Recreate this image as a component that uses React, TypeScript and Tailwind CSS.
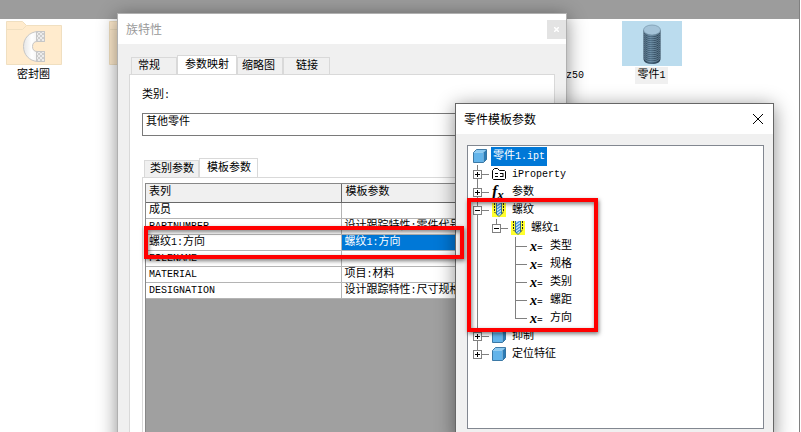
import { useState } from 'react'
import type { ReactNode } from 'react'
import clsx from 'clsx'

const FolderIcon = ({ ring = false }: { ring?: boolean }) => (
  <svg viewBox="0 0 56 44" className="h-11 w-14" shapeRendering="geometricPrecision">
    <path d="M.5 43.5V.5h16l4 4h35v39z" fill="#ffebcd" stroke="#f0dfc0" />
    <path d="M.5 8.500h16l4-4" fill="none" stroke="#f0dfc0" />
    {ring && (
      <>
        <defs>
          <pattern id="hatch" width="4" height="4" patternUnits="userSpaceOnUse">
            <path d="M0 0h4v4H0z" fill="#ececec" />
            <path d="M0 0h2v2H0zM2 2h2v2H2z" fill="#cdcdcd" />
          </pattern>
          <linearGradient id="ring" x1="0" x2="1">
            <stop offset="0" stopColor="#e6e6e6" />
            <stop offset=".4" stopColor="#fff" />
            <stop offset="1" stopColor="#e4e4e4" />
          </linearGradient>
        </defs>
        <path
          d="M38.500 10.500H32C23 11 17.500 17.500 17.500 25.500S23 40 32 40.500h6.500v-10H31c-3 0-4.500-2-4.500-5s1.500-5 4.500-5h7.500z"
          fill="url(#ring)"
          stroke="#c6c6c6"
        />
        <path d="M30.500 10.500h8v10h-8zM30.500 30.500h8v10h-8z" fill="url(#hatch)" stroke="#c6c6c6" />
      </>
    )}
  </svg>
)

const ThreadedRod = () => (
  <svg viewBox="0 0 18 40" className="h-10 w-[18px]">
    <defs>
      <linearGradient id="rod" x1="0" x2="1">
        <stop offset="0" stopColor="#24384a" />
        <stop offset=".4" stopColor="#4d6c84" />
        <stop offset="1" stopColor="#1f3344" />
      </linearGradient>
    </defs>
    <path d="M.5 6v29c0 3 3.500 5 8.500 5s8.500-2 8.500-5V6z" fill="url(#rod)" />
    {[8, 10, 12, 14, 16, 18, 20, 22, 24, 26, 28, 30, 32, 34].map((y) => (
      <path key={y} d={`M1 ${y}c1 5 15 5 16 0`} fill="none" stroke="#8fb0c6" strokeWidth=".6" />
    ))}
    <ellipse cx="9" cy="6" rx="8.500" ry="5" fill="#a4c3d8" stroke="#7796ab" strokeWidth=".7" />
  </svg>
)

const CubeIcon = () => (
  <svg viewBox="0 0 15 14" className="h-3.5 w-[15px]">
    <path d="M.5 3.500L3.500.5h10l-3 3z" fill="#8ecbf2" />
    <path d="M.5 3.500h10v10H.5z" fill="#63b4ea" />
    <path d="M10.500 3.500l3-3v10l-3 3z" fill="#2c7cb6" />
    <path d="M.5 3.500L3.500.5h10v10l-3 3H.5z" fill="none" stroke="#1d5f92" strokeWidth=".8" strokeLinejoin="round" />
  </svg>
)

const PropertyIcon = () => (
  <svg viewBox="0 0 15 14" className="h-3.5 w-[15px]" fill="none" stroke="#000">
    <path d="M.5 11.500v-8l2-2h3l2 2h5l1 1v7l-1 1h-11z" />
    <path d="M3 6.500h3M8 6.500h3M3 9.500h3M8 9.500h3M11 6v4" />
  </svg>
)

const ThreadIcon = () => (
  <svg viewBox="0 0 14 14" className="h-3.5 w-3.5">
    <path d="M0 0h14v14H0z" fill="#ffff2e" />
    <path d="M5 0h4v11l-2 2-2-2z" fill="#cfe8fb" />
    <path d="M5 3l4-3M5 6l4-3M5 9l4-3M5 12l4-3" stroke="#3f93dc" strokeWidth="1.200" />
    <path d="M4.500 0v11L7 13.500l2.500-2.500V0" fill="none" stroke="#1c5fa0" strokeWidth=".9" />
    <path d="M2.500 0v9l2 2M11.500 0v9l-2 2" fill="none" stroke="#222" strokeDasharray="2 1" />
  </svg>
)

const FxIcon = () => (
  <span className="flex font-['Liberation_Serif',serif] font-bold italic leading-none">
    <span className="text-[16px]">f</span>
    <span className="pt-1 text-[13px]">x</span>
  </span>
)

const VariableIcon = () => (
  <span className="flex items-center pt-0.5 font-['Liberation_Serif',serif] leading-none">
    <span className="text-[14px] font-bold italic">x</span>
    <span className="pt-0.5 text-[10px] font-bold">=</span>
  </span>
)

const icons: Record<string, ReactNode> = {
  cube: <CubeIcon />,
  property: <PropertyIcon />,
  fx: <FxIcon />,
  thread: <ThreadIcon />,
  variable: <VariableIcon />,
}

type Rail = 'blank' | 'pass' | 'tee' | 'end' | 'plus' | 'minus' | 'plusEnd' | 'minusEnd'

interface TreeRow {
  rails: Rail[]
  icon: string
  label: string
  latin?: string
  selected?: boolean
}

const treeRows: TreeRow[] = [
  { rails: [], icon: 'cube', label: '零件', latin: '1.ipt', selected: true },
  { rails: ['plus'], icon: 'property', label: '', latin: 'iProperty' },
  { rails: ['plus'], icon: 'fx', label: '参数' },
  { rails: ['minus'], icon: 'thread', label: '螺纹' },
  { rails: ['pass', 'minusEnd'], icon: 'thread', label: '螺纹', latin: '1' },
  { rails: ['pass', 'blank', 'tee'], icon: 'variable', label: '类型' },
  { rails: ['pass', 'blank', 'tee'], icon: 'variable', label: '规格' },
  { rails: ['pass', 'blank', 'tee'], icon: 'variable', label: '类别' },
  { rails: ['pass', 'blank', 'tee'], icon: 'variable', label: '螺距' },
  { rails: ['pass', 'blank', 'end'], icon: 'variable', label: '方向' },
  { rails: ['plus'], icon: 'cube', label: '抑制' },
  { rails: ['plusEnd'], icon: 'cube', label: '定位特征' },
]

const TreeRail = ({ rail }: { rail: Rail }) => {
  const expander = rail.startsWith('plus') || rail.startsWith('minus')
  const ends = rail.toLowerCase().endsWith('end')
  const drawing = (
    <svg viewBox="0 0 19 18" className="h-[18px] w-[19px]" shapeRendering="crispEdges" fill="none" stroke="#808080">
      {rail !== 'blank' && <path d={ends ? 'M4.500 0v9.500' : 'M4.500 0v18'} />}
      {rail !== 'blank' && rail !== 'pass' && <path d="M4 9.500h12" />}
      {expander && (
        <>
          <path d="M.5 5.500h8v8h-8z" fill="#fff" />
          <path d={rail.startsWith('plus') ? 'M2 9.500h5M4.500 7v5' : 'M2 9.500h5'} stroke="#000" />
        </>
      )}
    </svg>
  )
  return expander ? (
    <button type="button" aria-label="展开或折叠">
      {drawing}
    </button>
  ) : (
    drawing
  )
}

const Latin = ({ children }: { children: ReactNode }) => <span className="text-[10px]">{children}</span>

const Tab = ({
  active,
  onClick,
  className,
  children,
}: {
  active: boolean
  onClick: () => void
  className: string
  children: ReactNode
}) => (
  <button
    type="button"
    role="tab"
    aria-selected={active}
    onClick={onClick}
    className={clsx(
      'border border-b-0 border-[#d9d9d9] text-left leading-4',
      active ? '-mb-px h-5 bg-white pb-0.5' : 'h-[17px] bg-[#f0f0f0]',
      className
    )}
  >
    {children}
  </button>
)

const tableRows: { name: ReactNode; value: ReactNode; selected?: boolean }[] = [
  { name: '成员', value: '' },
  { name: <Latin>PARTNUMBER</Latin>, value: <>设计跟踪特性<Latin>:</Latin>零件代号</> },
  {
    name: <>螺纹<Latin>1:</Latin>方向</>,
    value: <>螺纹<Latin>1:</Latin>方向</>,
    selected: true,
  },
  { name: <Latin>FILENAME</Latin>, value: '' },
  { name: <Latin>MATERIAL</Latin>, value: <>项目<Latin>:</Latin>材料</> },
  { name: <Latin>DESIGNATION</Latin>, value: <>设计跟踪特性<Latin>:</Latin>尺寸规格</> },
]

const FamilyDialog = () => {
  const [tab, setTab] = useState('参数映射')
  const [subTab, setSubTab] = useState('模板参数')

  return (
    <section className="absolute -bottom-5 left-[117px] top-[13px] flex w-[450px] flex-col border border-[#b0b0b0] bg-[#f0f0f0] shadow-[0_3px_18px_rgba(0,0,0,0.45)]">
      <header className="flex h-[30px] shrink-0 items-center justify-between bg-white pl-2">
        <h2 className="font-['Noto_Sans_CJK_SC',sans-serif] text-[12px] text-[#999]">族特性</h2>
        <button type="button" aria-label="关闭" className="flex h-[19px] w-[19px] items-center justify-center bg-[#e3e3e3]">
          <svg viewBox="0 0 5 5" className="h-[5px] w-[5px]" stroke="#fff" strokeWidth="1.500">
            <path d="M0 0l5 5M5 0L0 5" />
          </svg>
        </button>
      </header>

      <div className="flex min-h-0 flex-1 flex-col px-[11px] pt-[11px]">
        <div role="tablist" className="flex items-end pl-0.5">
          <Tab active={tab === '常规'} onClick={() => setTab('常规')} className="w-[46px] pl-1.5">常规</Tab>
          <Tab active={tab === '参数映射'} onClick={() => setTab('参数映射')} className="w-[60px] pl-[7px]">参数映射</Tab>
          <Tab active={tab === '缩略图'} onClick={() => setTab('缩略图')} className="w-[46px] pl-1">缩略图</Tab>
          <Tab active={tab === '链接'} onClick={() => setTab('链接')} className="w-[47px] pl-3">链接</Tab>
        </div>

        <div className="flex min-h-0 flex-1 flex-col border border-[#d9d9d9] bg-white pl-3 pt-3">
          <label htmlFor="category" className="leading-4">
            类别<Latin>:</Latin>
          </label>
          <select
            id="category"
            className="mr-3 mt-[9px] h-[23px] appearance-none border border-[#7a7a7a] bg-white pb-1.5 pl-[3px] leading-4"
          >
            <option>其他零件</option>
          </select>

          <div role="tablist" className="mt-[22px] flex items-end pl-0.5">
            <Tab active={subTab === '类别参数'} onClick={() => setSubTab('类别参数')} className="w-[55px] pl-[5px]">类别参数</Tab>
            <Tab active={subTab === '模板参数'} onClick={() => setSubTab('模板参数')} className="w-[59px] pl-[7px]">模板参数</Tab>
          </div>
          <div className="min-h-0 flex-1 border-l border-t border-[#d9d9d9] pl-0.5 pt-[5px]">
            <div className="h-full border-l border-t border-[#888] bg-[#a0a0a0]">
              <table className="w-full table-fixed border-collapse bg-white text-left leading-[15px]">
                <colgroup>
                  <col className="w-[195px]" />
                  <col />
                </colgroup>
                <thead>
                  <tr className="h-[18px] border-b border-[#696969] bg-[#f0f0f0]">
                    <th className="border-r border-[#696969] p-0 pl-[3px] font-normal">表列</th>
                    <th className="p-0 pl-1 font-normal">模板参数</th>
                  </tr>
                </thead>
                <tbody>
                  {tableRows.map((row, i) => (
                    <tr key={i} className="h-4 border-b border-[#b4b4b4]">
                      <td className="border-r border-[#b4b4b4] p-0 pl-[3px]">{row.name}</td>
                      <td className={clsx('p-0 pl-[3px]', row.selected && 'bg-[#0078d7] text-white')}>{row.value}</td>
                    </tr>
                  ))}
                </tbody>
              </table>
            </div>
          </div>
        </div>
      </div>
    </section>
  )
}

const TemplateDialog = () => (
  <section className="absolute -bottom-2 left-[455px] top-[103px] flex w-[319px] flex-col border border-[#666] bg-[#f0f0f0] shadow-[0_3px_18px_rgba(0,0,0,0.45)]">
    <header className="flex h-[30px] shrink-0 items-center justify-between bg-white pl-2 pr-2.5">
      <h2 className="font-['Noto_Sans_CJK_SC',sans-serif] text-[12px]">零件模板参数</h2>
      <button type="button" aria-label="关闭">
        <svg viewBox="0 0 10 10" className="h-2.5 w-2.5" stroke="#000">
          <path d="M0 0l10 10M10 0L0 10" />
        </svg>
      </button>
    </header>
    <div className="flex min-h-0 flex-1 flex-col pb-2.5 pl-[11px] pr-[9px] pt-[11px]">
      <ul className="min-h-0 flex-1 border border-[#828790] bg-white pl-[5px] pt-px">
        {treeRows.map((row, i) => (
          <li key={i} className="flex h-[18px] items-center">
            {row.rails.map((rail, n) => (
              <TreeRail key={n} rail={rail} />
            ))}
            <span className="mr-[3px] flex w-[15px] shrink-0 items-center">{icons[row.icon]}</span>
            <span className={clsx('whitespace-nowrap px-0.5 leading-[18px]', row.selected && 'bg-[#0078d7] text-white')}>
              {row.label}
              {row.latin && <Latin>{row.latin}</Latin>}
            </span>
          </li>
        ))}
      </ul>
    </div>
  </section>
)

export default function App() {
  return (
    <div className="relative h-screen overflow-hidden bg-white font-['Liberation_Mono','Noto_Sans_CJK_SC',monospace] text-[11px] text-black">
      <main className="mr-px h-full overflow-hidden border-r border-[#808080]">
        <div className="h-[19px] bg-[#9c9c9c]" />
        <div className="-ml-[18px] grid grid-cols-[repeat(7,103px)] pt-0.5 leading-4">
          <figure className="flex flex-col items-center gap-0.5">
            <FolderIcon ring />
            <figcaption>密封圈</figcaption>
          </figure>
          <figure className="flex flex-col items-center">
            <FolderIcon />
          </figure>
          <figure className="col-start-6 flex items-end justify-end pr-4">
            <figcaption>
              <Latin>z50</Latin>
            </figcaption>
          </figure>
          <figure className="flex flex-col items-center gap-px">
            <div className="flex h-[45px] w-[60px] items-center justify-center bg-[#bbdcee]">
              <ThreadedRod />
            </div>
            <figcaption className="bg-[#f0f0f0] px-0.5">
              零件<Latin>1</Latin>
            </figcaption>
          </figure>
        </div>
      </main>

      <FamilyDialog />
      <TemplateDialog />

      {/* highlight frames */}
      <div className="pointer-events-none absolute left-[144px] top-[226px] h-[33px] w-[320px] border-4 border-[#f00] shadow-[1px_2px_4px_rgba(0,0,0,0.5),inset_1px_2px_4px_rgba(0,0,0,0.5)]" />
      <div className="pointer-events-none absolute left-[467px] top-[198px] h-[134px] w-[131px] border-4 border-[#f00] shadow-[1px_2px_4px_rgba(0,0,0,0.5),inset_1px_2px_4px_rgba(0,0,0,0.5)]" />
    </div>
  )
}
